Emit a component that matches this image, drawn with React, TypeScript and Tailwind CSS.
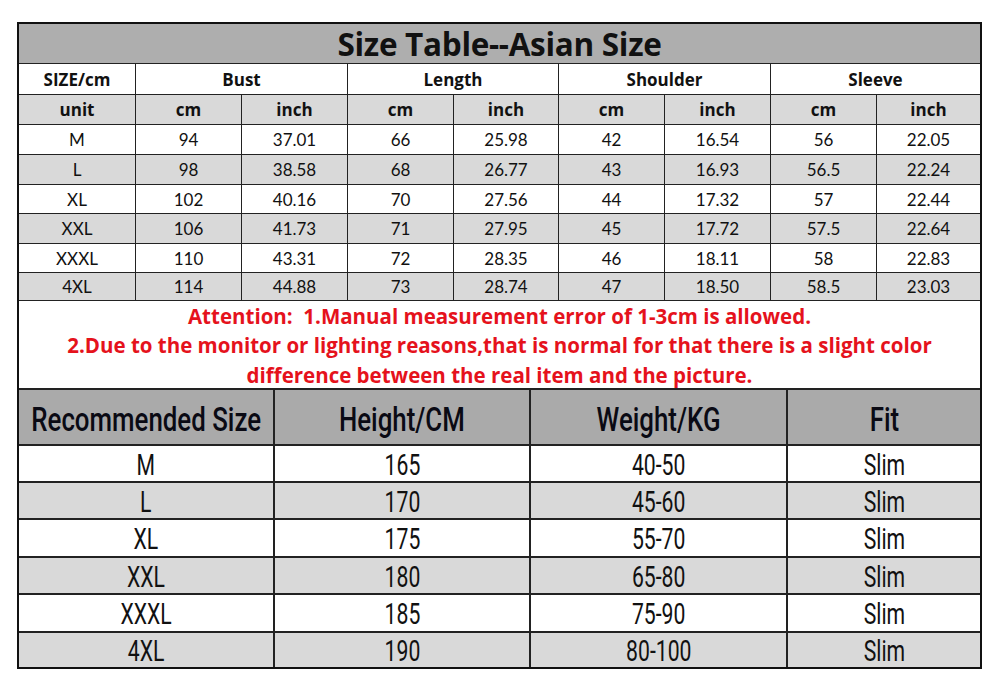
import React from "react";

const topCols = "grid-cols-[117px_106px_106px_106px_105px_106px_106px_106px_1fr]";
const botCols = "grid-cols-[256px_256px_257px_1fr]";

const data = [
  ["M", "94", "37.01", "66", "25.98", "42", "16.54", "56", "22.05"],
  ["L", "98", "38.58", "68", "26.77", "43", "16.93", "56.5", "22.24"],
  ["XL", "102", "40.16", "70", "27.56", "44", "17.32", "57", "22.44"],
  ["XXL", "106", "41.73", "71", "27.95", "45", "17.72", "57.5", "22.64"],
  ["XXXL", "110", "43.31", "72", "28.35", "46", "18.11", "58", "22.83"],
  ["4XL", "114", "44.88", "73", "28.74", "47", "18.50", "58.5", "23.03"],
];
const dataH = ["h-[30px]", "h-[30px]", "h-[29px]", "h-[30px]", "h-[29px]", "h-[28px]"];

const rec = [
  ["M", "165", "40-50", "Slim"],
  ["L", "170", "45-60", "Slim"],
  ["XL", "175", "55-70", "Slim"],
  ["XXL", "180", "65-80", "Slim"],
  ["XXXL", "185", "75-90", "Slim"],
  ["4XL", "190", "80-100", "Slim"],
];
const recH = ["h-[37px]", "h-[37px]", "h-[38px]", "h-[37px]", "h-[38px]", "h-[34px]"];

function Cond({ children, className = "" }: { children: React.ReactNode; className?: string }) {
  return <span className={"inline-block scale-x-[0.73] whitespace-nowrap leading-none " + className}>{children}</span>;
}

export default function App() {
  return (
    <div className="w-[1000px] h-[686px] bg-white pt-[22px] pl-[17px] font-['Lato','Noto_Sans',sans-serif] text-[#111]">
      <div className="w-[965px] border-2 border-[#111]">
        {/* Title */}
        <div className="h-[40px] bg-[#aeaeae] border-b border-[#222] flex items-center justify-center">
          <span className="text-[31.5px] font-bold leading-none font-['Open_Sans',sans-serif] tracking-[-0.3px]">
            Size Table--Asian Size
          </span>
        </div>
        {/* Header row */}
        <div className={"grid h-[31px] border-b border-[#222] font-['Open_Sans',sans-serif] " + topCols}>
          <div className="border-r border-[#222] flex items-center justify-center text-[17px] font-bold leading-none">SIZE/cm</div>
          <div className="col-span-2 border-r border-[#222] flex items-center justify-center text-[17px] font-bold leading-none">Bust</div>
          <div className="col-span-2 border-r border-[#222] flex items-center justify-center text-[17px] font-bold leading-none">Length</div>
          <div className="col-span-2 border-r border-[#222] flex items-center justify-center text-[17px] font-bold leading-none">Shoulder</div>
          <div className="col-span-2 flex items-center justify-center text-[17px] font-bold leading-none">Sleeve</div>
        </div>
        {/* Unit row */}
        <div className={"grid h-[30px] border-b border-[#222] bg-[#d9d9d9] font-['Open_Sans',sans-serif] " + topCols}>
          {["unit", "cm", "inch", "cm", "inch", "cm", "inch", "cm", "inch"].map((t, i) => (
            <div
              key={i}
              className={
                "flex items-center justify-center text-[17px] font-bold leading-none " +
                (i < 8 ? "border-r border-[#222]" : "")
              }
            >
              {t}
            </div>
          ))}
        </div>
        {/* Data rows */}
        {data.map((row, r) => (
          <div
            key={r}
            className={
              "grid border-b border-[#222] " + dataH[r] + " " + (r % 2 === 1 ? "bg-[#d9d9d9] " : "bg-white ") + topCols
            }
          >
            {row.map((t, i) => (
              <div
                key={i}
                className={
                  "flex items-center justify-center text-[17px] leading-none " + (i < 8 ? "border-r border-[#222]" : "")
                }
              >
                {t}
              </div>
            ))}
          </div>
        ))}
        {/* Attention */}
        <div className="h-[89px] border-b-2 border-[#222] flex flex-col items-center justify-center text-[#e5121c] font-bold text-[20.5px] leading-[29.5px] pt-[3px] font-['Open_Sans',sans-serif]">
          <div>Attention:&nbsp; 1.Manual measurement error of 1-3cm is allowed.</div>
          <div>2.Due to the monitor or lighting reasons,that is normal for that there is a slight color</div>
          <div>difference between the real item and the picture.</div>
        </div>
        {/* Recommended header */}
        <div className={"grid h-[56px] border-b-2 border-[#222] bg-[#aaaaaa] font-['Roboto',sans-serif] " + botCols}>
          {["Recommended Size", "Height/CM", "Weight/KG", "Fit"].map((t, i) => (
            <div
              key={i}
              className={
                "flex items-center justify-center text-[34px] font-medium leading-none text-[#0a0a14] pt-[4px] " +
                (i < 3 ? "border-r-2 border-[#222]" : "")
              }
            >
              <Cond className="scale-x-[0.76]">{t}</Cond>
            </div>
          ))}
        </div>
        {rec.map((row, r) => (
          <div
            key={r}
            className={
              "grid font-['Roboto',sans-serif] " +
              recH[r] +
              " " +
              (r < 5 ? "border-b-2 border-[#222] " : "") +
              (r % 2 === 1 ? "bg-[#d9d9d9] " : "bg-white ") +
              botCols
            }
          >
            {row.map((t, i) => (
              <div
                key={i}
                className={
                  "flex items-center justify-center text-[29px] leading-none text-[#111] pt-[3px] " +
                  (i < 3 ? "border-r-2 border-[#222]" : "")
                }
              >
                <Cond>{t}</Cond>
              </div>
            ))}
          </div>
        ))}
      </div>
    </div>
  );
}
